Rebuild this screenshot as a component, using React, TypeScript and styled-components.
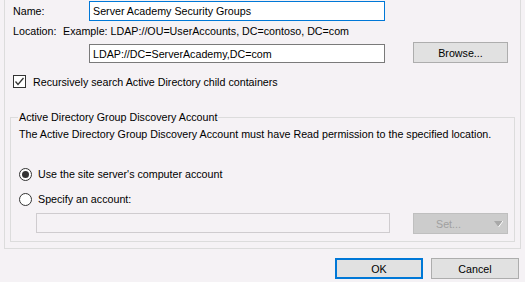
import React from "react";
import styled, { createGlobalStyle } from "styled-components";

const GlobalStyle = createGlobalStyle`
  html, body {
    margin: 0;
    padding: 0;
    background: #f5f2f5;
  }
  body {
    font-family: "Liberation Sans", Arial, sans-serif;
    font-size: 10.7px;
    color: #000;
  }
`;

const Window = styled.div`
  width: 525px;
  height: 282px;
  overflow: hidden;
`;

const Panel = styled.div`
  box-sizing: border-box;
  margin-left: 4px;
  width: 517px;
  height: 249px;
  border: 1px solid #dcdcdc;
  border-top: none;
  padding: 1px 0 0 8px;
`;

const Row = styled.div<{ $top?: number; $height?: number }>`
  display: flex;
  align-items: center;
  margin-top: ${(p) => p.$top ?? 0}px;
  height: ${(p) => (p.$height ? `${p.$height}px` : "auto")};
`;

const Label = styled.span<{ $width?: number }>`
  width: ${(p) => (p.$width ? `${p.$width}px` : "auto")};
  flex: none;
  white-space: nowrap;
`;

const TextBox = styled.div<{ $width: number; $focus?: boolean; $disabled?: boolean; $height?: number }>`
  box-sizing: border-box;
  width: ${(p) => p.$width}px;
  height: ${(p) => p.$height ?? 20}px;
  border: 1px solid ${(p) => (p.$focus ? "#0078d7" : p.$disabled ? "#cfcccf" : "#7a7a7a")};
  background: ${(p) => (p.$disabled ? "#f5f2f5" : "#fff")};
  padding: 0 3px;
  display: flex;
  align-items: center;
  white-space: nowrap;
  flex: none;
`;

const Button = styled.div<{ $primary?: boolean; $disabled?: boolean; $width?: number }>`
  box-sizing: border-box;
  width: ${(p) => p.$width ?? 95}px;
  height: 21px;
  flex: none;
  display: flex;
  align-items: center;
  justify-content: center;
  position: relative;
  background: ${(p) => (p.$disabled ? "#cccccc" : "#e1e1e1")};
  border: ${(p) => (p.$primary ? "2px solid #0078d7" : p.$disabled ? "1px solid #bfbfbf" : "1px solid #adadad")};
  color: ${(p) => (p.$disabled ? "#a0a0a0" : "#000")};
`;

const SetLabel = styled.span`
  margin-left: -24px;
`;

const DropArrow = styled.svg`
  position: absolute;
  right: 4px;
  top: 7px;
`;

const CheckBox = styled.span`
  box-sizing: border-box;
  width: 13px;
  height: 13px;
  border: 1px solid #333;
  background: #fff;
  display: inline-flex;
  align-items: center;
  justify-content: center;
  margin-right: 7px;
  flex: none;
`;

const Radio = styled.span<{ $checked?: boolean }>`
  box-sizing: border-box;
  width: 13px;
  height: 13px;
  border-radius: 50%;
  border: 1px solid #333;
  background: #fff;
  margin-right: 6px;
  flex: none;
  display: inline-flex;
  align-items: center;
  justify-content: center;
  &::after {
    content: "";
    display: ${(p) => (p.$checked ? "block" : "none")};
    width: 7px;
    height: 7px;
    border-radius: 50%;
    background: #333;
  }
`;

const Group = styled.fieldset`
  box-sizing: border-box;
  margin: 22px 0 0 -3px;
  width: 505px;
  height: 132px;
  border: 1px solid #dcdcdc;
  padding: 0 0 0 8px;
`;

const Legend = styled.legend`
  padding: 0 1px;
  margin-left: -1px;
  line-height: 14px;
`;

const Spacer = styled.div<{ $w: number }>`
  width: ${(p) => p.$w}px;
  flex: none;
`;

const Footer = styled.div`
  display: flex;
  justify-content: flex-end;
  gap: 8px;
  margin: 9px 6px 0 0;
`;

export default function App() {
  return (
    <Window>
      <GlobalStyle />
      <Panel>
        <Row $height={20}>
          <Label $width={76}>Name:</Label>
          <TextBox $width={296} $focus>Server Academy Security Groups</TextBox>
        </Row>
        <Row $top={3} $height={14}>
          <Label $width={50}>Location:</Label>
          <Label>Example: LDAP://OU=UserAccounts, DC=contoso, DC=com</Label>
        </Row>
        <Row $top={4} $height={21}>
          <Spacer $w={76} />
          <TextBox $width={296} $height={19} style={{ alignSelf: "flex-end" }}>
            LDAP://DC=ServerAcademy,DC=com
          </TextBox>
          <Spacer $w={28} />
          <Button>Browse...</Button>
        </Row>
        <Row $top={12} $height={13}>
          <CheckBox>
            <svg width="11" height="11" viewBox="0 0 11 11">
              <path d="M1.5 5.5 L4 8.5 L9.5 2" fill="none" stroke="#333" strokeWidth="1.3" />
            </svg>
          </CheckBox>
          <Label>Recursively search Active Directory child containers</Label>
        </Row>
        <Group>
          <Legend>Active Directory Group Discovery Account</Legend>
          <Row $top={3} $height={14}>
            <Label>The Active Directory Group Discovery Account must have Read permission to the specified location.</Label>
          </Row>
          <Row $top={26} $height={14}>
            <Radio $checked />
            <Label>Use the site server's computer account</Label>
          </Row>
          <Row $top={11} $height={14}>
            <Radio />
            <Label>Specify an account:</Label>
          </Row>
          <Row $top={7} $height={21}>
            <Spacer $w={17} />
            <TextBox $width={354} $disabled style={{ alignSelf: "flex-start" }} />
            <Spacer $w={23} />
            <Button $disabled>
              <SetLabel>Set...</SetLabel>
              <DropArrow width="9" height="7" viewBox="0 0 9 7">
                <path d="M0 0 H9 L4.5 6 Z" fill="#a8a8a8" />
                <path d="M9 0 L4.5 6" stroke="#fff" strokeWidth="1" />
              </DropArrow>
            </Button>
          </Row>
        </Group>
      </Panel>
      <Footer>
        <Button $primary $width={88}>OK</Button>
        <Button $width={88}>Cancel</Button>
      </Footer>
    </Window>
  );
}
